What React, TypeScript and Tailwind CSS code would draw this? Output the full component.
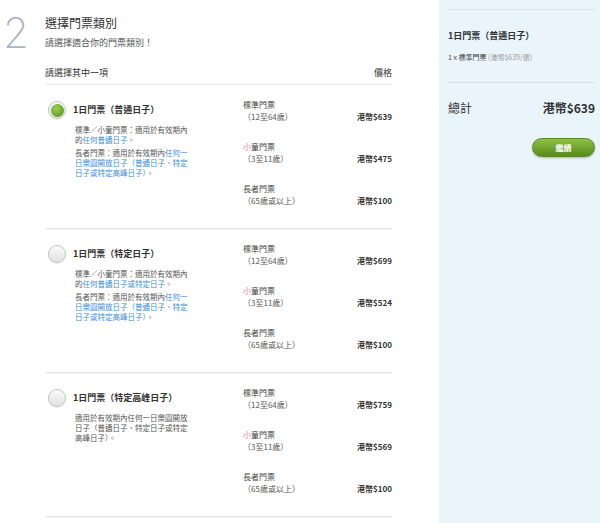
import React from "react";

const font = { fontFamily: '"Noto Sans CJK TC", "Noto Sans", sans-serif' };

type Seg = { t: string; link?: boolean };

interface TicketRow {
  title: string;
  selected: boolean;
  desc: Seg[][];
  prices: string[];
}

const rows: TicketRow[] = [
  {
    title: "1日門票（普通日子）",
    selected: true,
    desc: [
      [{ t: "標準／小童門票：適用於有效期內的" }, { t: "任何普通日子", link: true }, { t: "。" }],
      [
        { t: "長者門票：適用於有效期內" },
        { t: "任何一日樂園開放日子（普通日子、特定日子或特定高峰日子）", link: true },
        { t: "。" },
      ],
    ],
    prices: ["港幣$639", "港幣$475", "港幣$100"],
  },
  {
    title: "1日門票（特定日子）",
    selected: false,
    desc: [
      [{ t: "標準／小童門票：適用於有效期內的" }, { t: "任何普通日子或特定日子", link: true }, { t: "。" }],
      [
        { t: "長者門票：適用於有效期內" },
        { t: "任何一日樂園開放日子（普通日子、特定日子或特定高峰日子）", link: true },
        { t: "。" },
      ],
    ],
    prices: ["港幣$699", "港幣$524", "港幣$100"],
  },
  {
    title: "1日門票（特定高峰日子）",
    selected: false,
    desc: [[{ t: "適用於有效期內任何一日樂園開放日子（普通日子、特定日子或特定高峰日子）。" }]],
    prices: ["港幣$759", "港幣$569", "港幣$100"],
  },
];

const Radio = ({ on }: { on: boolean }) => (
  <div className="w-[18px] h-[18px] rounded-full border border-[#c4c4c4] bg-gradient-to-b from-[#fafafa] to-[#e2e2e2] flex items-center justify-center shadow-[0_1px_1px_rgba(0,0,0,0.08)]">
    {on && (
      <div className="w-[13px] h-[13px] rounded-full bg-[radial-gradient(circle_at_40%_35%,#9fd05a,#6aa82a_60%,#548f1c)]" />
    )}
  </div>
);

const Category = ({ name, age, price }: { name: React.ReactNode; age: string; price: string }) => (
  <div className="flex justify-between items-end text-[8px] leading-[12px]">
    <div>
      <div className="text-[#444]">{name}</div>
      <div className="text-[#555]">{age}</div>
    </div>
    <div className="font-bold text-[#333]">{price}</div>
  </div>
);

const App = () => {
  return (
    <div className="flex h-[523px] w-[600px] overflow-hidden bg-white" style={font}>
      <div className="flex w-[439px]">
        <div className="w-[45px] pl-[3px] pt-[12px]">
          <div
            className="text-[42px] leading-none font-extralight text-[#a9b6c6]"
            style={{ fontFamily: "Inter, sans-serif" }}
          >
            2
          </div>
        </div>
        <div className="w-[347px] pt-[15px]">
          <div className="text-[12px] leading-[16px] text-[#333]">選擇門票類別</div>
          <div className="mt-[6px] text-[9px] leading-[12px] text-[#555]">請選擇適合你的門票類別！</div>
          <div className="mt-[18px] pb-[5px] flex justify-between text-[9px] leading-[12px] text-[#333] border-b border-[#e6e6e6]">
            <span>請選擇其中一項</span>
            <span>價格</span>
          </div>
          {rows.map((r, i) => (
            <div key={i} className="flex border-b border-[#e3e3e3] shadow-[0_1px_0_rgba(0,0,0,0.02)]">
              <div className="w-[198px] pt-[16px]">
                <div className="flex items-center gap-[7px] pl-[3px]">
                  <Radio on={r.selected} />
                  <div className="text-[9px] leading-[12px] font-bold text-[#333]">{r.title}</div>
                </div>
                <div className="pl-[30px] mt-[6px] w-[146px] flex flex-col gap-[3px]">
                  {r.desc.map((p, j) => (
                    <p key={j} className="text-[7.5px] leading-[10px] text-[#555]">
                      {p.map((s, k) => (
                        <span key={k} className={s.link ? "text-[#3a8fd9]" : ""}>
                          {s.t}
                        </span>
                      ))}
                    </p>
                  ))}
                </div>
              </div>
              <div className="flex-1 pt-[14px] pb-[21px] flex flex-col gap-[18px]">
                <Category name="標準門票" age="（12至64歲）" price={r.prices[0]} />
                <Category
                  name={
                    <>
                      <span className="text-[#c08aa0]">小</span>童門票
                    </>
                  }
                  age="（3至11歲）"
                  price={r.prices[1]}
                />
                <Category name="長者門票" age="（65歲或以上）" price={r.prices[2]} />
              </div>
            </div>
          ))}
        </div>
      </div>
      <div className="flex-1 bg-[#e9f4fb] pl-[9px] pr-[5px] pt-[9px] flex flex-col">
        <div className="border-t border-[#d3e2ec]" />
        <div className="mt-[20px] text-[9px] leading-[12px] font-bold text-[#333]">1日門票（普通日子）</div>
        <div className="mt-[10px] text-[7px] leading-[10px] text-[#444]">
          1 x 標準門票 <span className="text-[#999]">(港幣$639/張)</span>
        </div>
        <div className="mt-[20px] border-t border-[#d3e2ec]" />
        <div className="mt-[17px] flex justify-between text-[12px] leading-[16px] text-[#333]">
          <span>總計</span>
          <span className="font-bold">港幣$639</span>
        </div>
        <button className="mt-[22px] self-end w-[63px] h-[19px] rounded-full bg-gradient-to-b from-[#8fc045] to-[#558c1a] border border-[#5a8a22] text-white text-[8px] font-bold shadow-[0_1px_2px_rgba(0,0,0,0.25)]">
          繼續
        </button>
      </div>
    </div>
  );
};

export default App;
